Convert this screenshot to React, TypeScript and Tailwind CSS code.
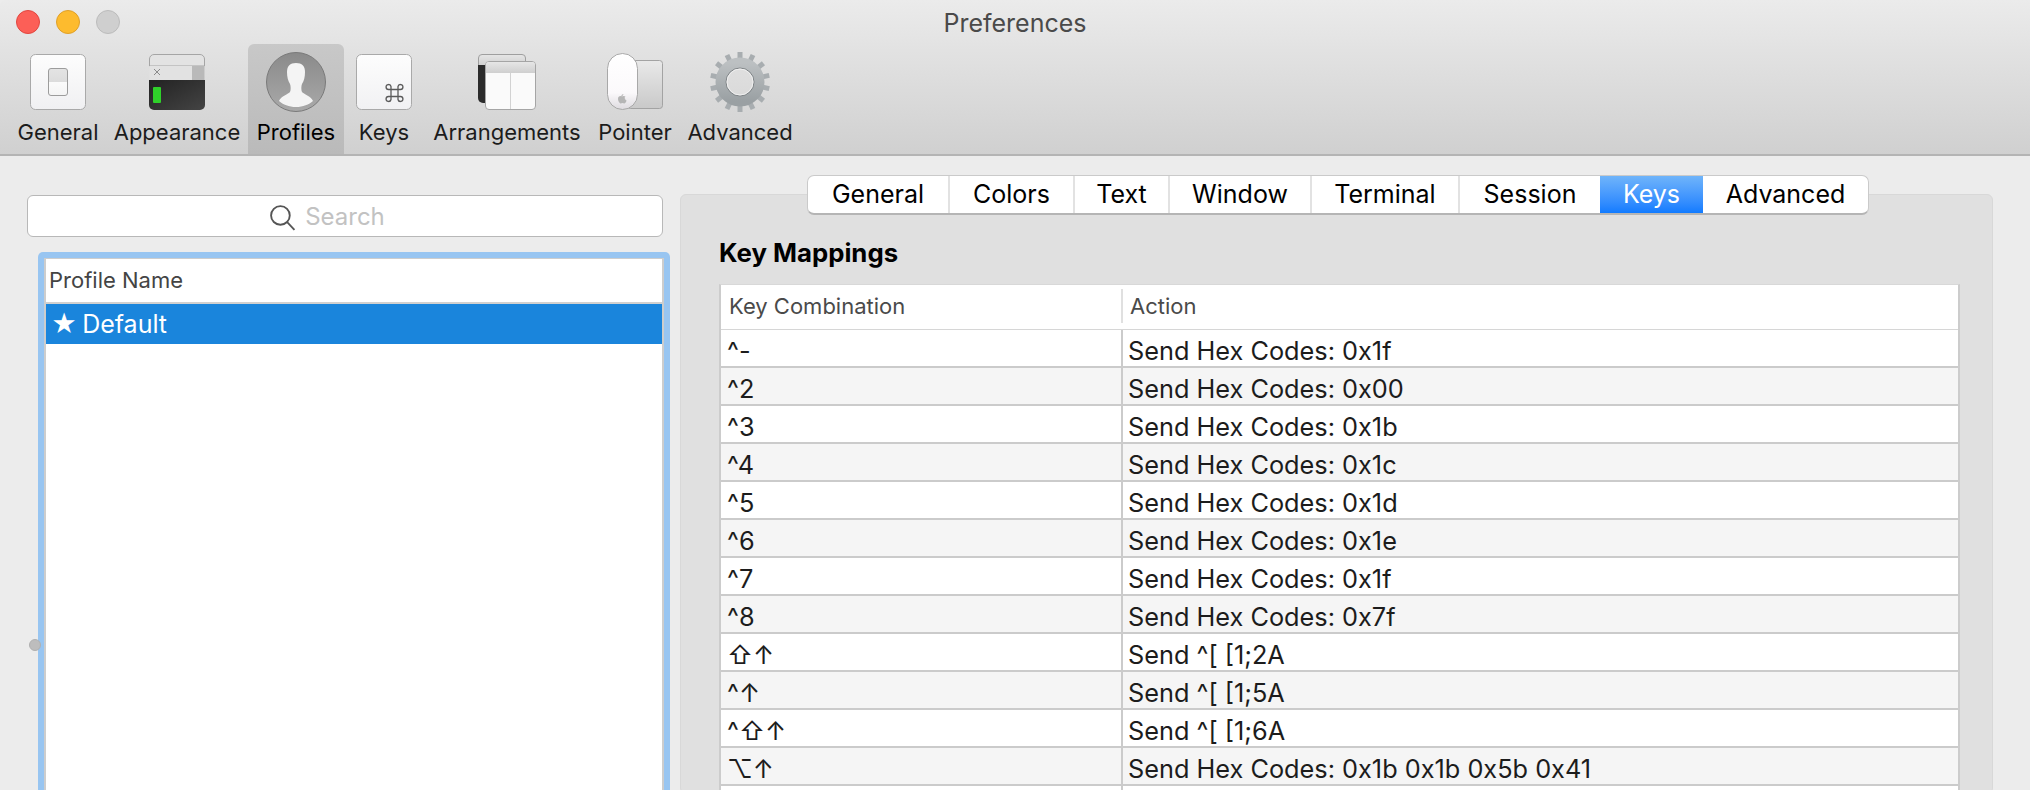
import React from 'react';

const toolbarItems = [
  { label: 'General', width: 'w-[96px]' },
  { label: 'Appearance', width: 'w-[142px]' },
  { label: 'Profiles', width: 'w-[96px]' },
  { label: 'Keys', width: 'w-[80px]' },
  { label: 'Arrangements', width: 'w-[166px]' },
  { label: 'Pointer', width: 'w-[90px]' },
  { label: 'Advanced', width: 'w-[120px]' },
];

const tabs = [
  { label: 'General', width: 'w-[142px]' },
  { label: 'Colors', width: 'w-[125px]' },
  { label: 'Text', width: 'w-[95px]' },
  { label: 'Window', width: 'w-[142px]' },
  { label: 'Terminal', width: 'w-[148px]' },
  { label: 'Session', width: 'w-[140px]' },
  { label: 'Keys', width: 'w-[103px]', active: true },
  { label: 'Advanced', width: 'w-[165px]' },
];

const mappings = [
  ['^-', 'Send Hex Codes: 0x1f'],
  ['^2', 'Send Hex Codes: 0x00'],
  ['^3', 'Send Hex Codes: 0x1b'],
  ['^4', 'Send Hex Codes: 0x1c'],
  ['^5', 'Send Hex Codes: 0x1d'],
  ['^6', 'Send Hex Codes: 0x1e'],
  ['^7', 'Send Hex Codes: 0x1f'],
  ['^8', 'Send Hex Codes: 0x7f'],
  ['⇧↑', 'Send ^[ [1;2A'],
  ['^↑', 'Send ^[ [1;5A'],
  ['^⇧↑', 'Send ^[ [1;6A'],
  ['⌥↑', 'Send Hex Codes: 0x1b 0x1b 0x5b 0x41'],
  ['', ''],
];

const GeneralIcon = () => (
  <svg width="56" height="56" viewBox="0 0 56 56">
    <defs>
      <linearGradient id="gen-bg" x1="0" y1="0" x2="0" y2="1">
        <stop offset="0" stopColor="#fdfdfd" />
        <stop offset="1" stopColor="#f0f0f2" />
      </linearGradient>
      <linearGradient id="gen-sw" x1="0" y1="0" x2="0" y2="1">
        <stop offset="0" stopColor="#e4e4e4" />
        <stop offset="0.5" stopColor="#dcdcdc" />
        <stop offset="0.51" stopColor="#fbfbfb" />
        <stop offset="1" stopColor="#f4f4f4" />
      </linearGradient>
    </defs>
    <rect x="0.5" y="0.5" width="55" height="55" rx="5" fill="url(#gen-bg)" stroke="#a9a9a9" />
    <rect x="18.5" y="14.5" width="19" height="27" rx="2.5" fill="url(#gen-sw)" stroke="#9c9c9c" />
  </svg>
);

const AppearanceIcon = () => (
  <svg width="56" height="56" viewBox="0 0 56 56">
    <defs>
      <linearGradient id="app-term" x1="0" y1="0" x2="1" y2="1">
        <stop offset="0" stopColor="#222" />
        <stop offset="1" stopColor="#444" />
      </linearGradient>
    </defs>
    <path d="M5 0.5h46a4.5 4.5 0 0 1 4.5 4.5v7H0.5V5A4.5 4.5 0 0 1 5 0.5z" fill="#e3e3e3" stroke="#a5a5a5" />
    <rect x="0.5" y="12" width="55" height="14" fill="#e2e2e2" />
    <rect x="43" y="12" width="12.5" height="14" fill="#b9b9b9" />
    <path d="M5 15l6 6M11 15l-6 6" stroke="#8a8a8a" strokeWidth="1" />
    <path d="M0 26h56v25a5 5 0 0 1-5 5H5a5 5 0 0 1-5-5z" fill="url(#app-term)" />
    <rect x="4" y="33" width="8" height="16" rx="1" fill="#2fd12a" />
  </svg>
);

const ProfileIcon = () => (
  <svg width="60" height="60" viewBox="0 0 60 60">
    <defs>
      <linearGradient id="pro-bg" x1="0" y1="0" x2="0" y2="1">
        <stop offset="0" stopColor="#8a8a8a" />
        <stop offset="1" stopColor="#a9a9a9" />
      </linearGradient>
    </defs>
    <circle cx="30" cy="30" r="29.5" fill="url(#pro-bg)" stroke="#7a7a7a" />
    <path
      d="M30 11c-6 0-9 3-9 9 0 5 1 9 3 12 .8 2 1 6 0 8-1.500 2-9 4-11 9 4 3.500 10 6 17 6s13-2.500 17-6c-2-5-9.500-7-11-9-1-2-.8-6 0-8 2-3 3-7 3-12 0-6-3-9-9-9z"
      fill="#f4f4f4"
    />
  </svg>
);

const KeysIcon = () => (
  <svg width="56" height="56" viewBox="0 0 56 56">
    <defs>
      <linearGradient id="key-bg" x1="0" y1="0" x2="0" y2="1">
        <stop offset="0" stopColor="#fdfdfd" />
        <stop offset="1" stopColor="#f1f1f3" />
      </linearGradient>
    </defs>
    <rect x="0.5" y="0.5" width="55" height="55" rx="5" fill="url(#key-bg)" stroke="#a9a9a9" />
    <path
      d="M35 35.500h7v7h-7zM35 35.500v-3a2.500 2.500 0 1 0-2.500 3H35M42 35.500h2.500a2.500 2.500 0 1 0-2.500-3V35.500M35 42.500v3a2.500 2.500 0 1 1-2.500-3H35M42 42.500h2.500a2.500 2.500 0 1 1-2.500 3V42.500"
      fill="none"
      stroke="#5a5a5a"
      strokeWidth="1.300"
    />
  </svg>
);

const ArrangementsIcon = () => (
  <svg width="58" height="56" viewBox="0 0 58 56">
    <defs>
      <linearGradient id="arr-top" x1="0" y1="0" x2="0" y2="1">
        <stop offset="0" stopColor="#e6e6e6" />
        <stop offset="1" stopColor="#cfcfcf" />
      </linearGradient>
    </defs>
    <path d="M4 .5h40a3.500 3.500 0 0 1 3.500 3.500v8H.5V4A3.500 3.500 0 0 1 4 .5z" fill="url(#arr-top)" stroke="#9f9f9f" />
    <path d="M0 11h20v38H5a5 5 0 0 1-5-5z" fill="#2b2b2b" />
    <rect x="7.500" y="7.500" width="50" height="48" rx="3.500" fill="#fafafa" stroke="#a5a5a5" />
    <path d="M11 8h43a3 3 0 0 1 3 3v8H8v-8a3 3 0 0 1 3-3z" fill="url(#arr-top)" />
    <path d="M32.500 19v36" stroke="#d2d2d2" />
  </svg>
);

const PointerIcon = () => (
  <svg width="56" height="58" viewBox="0 0 56 58">
    <defs>
      <linearGradient id="ptr-pad" x1="0" y1="0" x2="0" y2="1">
        <stop offset="0" stopColor="#e9e9e9" />
        <stop offset="1" stopColor="#c9c9c9" />
      </linearGradient>
      <linearGradient id="ptr-mouse" x1="0" y1="0" x2="0" y2="1">
        <stop offset="0" stopColor="#ffffff" />
        <stop offset="0.7" stopColor="#fbf9fb" />
        <stop offset="1" stopColor="#dedbe0" />
      </linearGradient>
    </defs>
    <rect x="20.500" y="7.500" width="35" height="48" rx="3" fill="url(#ptr-pad)" stroke="#a3a3a3" />
    <rect x="0.500" y="0.500" width="30" height="56" rx="15" fill="url(#ptr-mouse)" stroke="#a8a8a8" />
    <path
      d="M15.800 42.500c.6-.7.600-1.500.600-1.500s-1 .1-1.500.8c-.4.500-.6 1.200-.5 1.400.7 0 1-.2 1.400-.7zM17.500 45.500c0-1 .8-1.500 1-1.700-.6-.8-1.400-.9-1.800-.9-.7 0-1.200.4-1.700.4s-1-.4-1.600-.4c-1.200 0-2.400 1-2.400 2.800 0 2.100 1.600 4.800 2.800 4.800.6 0 1-.4 1.700-.4s1 .4 1.700.4c1 0 2-1.900 2.400-3-.8-.3-1.600-1.100-1.600-2.300z"
      fill="#b5b5b5"
    />
  </svg>
);

const GearIcon = () => (
  <svg width="60" height="60" viewBox="0 0 60 60">
    <defs>
      <linearGradient id="gear-bg" x1="0" y1="0" x2="0" y2="1">
        <stop offset="0" stopColor="#bcc0c2" />
        <stop offset="1" stopColor="#9aa0a3" />
      </linearGradient>
    </defs>
    {Array.from({ length: 14 }).map((_, i) => (
      <rect key={i} x="27.500" y="0" width="5" height="12" fill="#a8adb0" transform={`rotate(${(i * 360) / 14} 30 30)`} />
    ))}
    <circle cx="30" cy="30" r="19" fill="none" stroke="url(#gear-bg)" strokeWidth="11" />
    <circle cx="30" cy="30" r="14" fill="none" stroke="#7f8487" strokeWidth="1" />
    <circle cx="30" cy="30" r="13" fill="none" stroke="#f0f0f0" strokeWidth="1" />
  </svg>
);

const toolbarIcons = [GeneralIcon, AppearanceIcon, ProfileIcon, KeysIcon, ArrangementsIcon, PointerIcon, GearIcon];

export default function App() {
  return (
    <div className="w-[2030px] h-[790px] overflow-hidden bg-[#ececec] text-[#1c1c1c] [font-family:Inter,sans-serif]">
      {/* title bar and toolbar */}
      <div className="relative h-[156px] border-b-2 border-[#b4b4b4] bg-gradient-to-b from-[#ebebeb] to-[#d0d0d0] rounded-tl-[6px]">
        <div className="h-[44px] flex items-center pl-[16px] gap-[16px]">
          <span className="w-[24px] h-[24px] rounded-full bg-[#fc5f57] border border-[#e2463f]" />
          <span className="w-[24px] h-[24px] rounded-full bg-[#fdbb2e] border border-[#e0a028]" />
          <span className="w-[24px] h-[24px] rounded-full bg-[#cfcfcf] border border-[#bcbcbc]" />
          <span className="flex-1 text-center text-[25px] text-[#4a4a4a] pr-[136px] pt-[3px]">Preferences</span>
        </div>
        <div className="flex pl-[10px] h-[110px]">
          {toolbarItems.map((item, i) => {
            const Icon = toolbarIcons[i];
            return (
              <div
                key={item.label}
                className={`${item.width} flex flex-col items-center rounded-t-[6px] ${item.label === 'Profiles' ? 'bg-gradient-to-b from-[#c8c8c8] to-[#bababa] text-black' : ''}`}
              >
                <div className="h-[76px] flex items-center justify-center">
                  <Icon />
                </div>
                <span className="text-[22px] leading-[24px] whitespace-nowrap">{item.label}</span>
              </div>
            );
          })}
        </div>
      </div>

      <div className="flex">
        {/* profile list */}
        <div className="w-[680px] shrink-0 pl-[27px] pt-[39px] relative">
          <div className="w-[636px] h-[42px] bg-white border border-[#b8b8b8] rounded-[6px] flex items-center justify-center gap-[9px] pr-[36px] pt-[2px]">
            <svg width="27" height="27" viewBox="0 0 26 26" fill="none" stroke="#555" strokeWidth="1.800">
              <circle cx="11" cy="11" r="9" />
              <path d="M17.500 17.500l7 7.500" />
            </svg>
            <span className="text-[24px] text-[#c2c2c2]">Search</span>
          </div>
          <div className="ml-[11px] mt-[15px] w-[632px] h-[600px] bg-[#98c5f1] rounded-[5px] p-[6px]">
            <div className="h-full bg-white border-2 border-[#cdcdcd] border-t-[1px]">
              <div className="h-[45px] border-b-2 border-[#d0d0d0] flex items-center pl-[3px] text-[22px] text-[#444]">Profile Name</div>
              <div className="h-[40px] bg-[#1a85dc] text-white text-[25px] flex items-center pl-[5px] gap-[5px] pt-[2px]">
                <span>★</span>
                <span>Default</span>
              </div>
            </div>
          </div>
          <span className="absolute left-[29px] top-[483px] w-[12px] h-[12px] rounded-full bg-[#bdbdbd] border border-[#b0b0b0]" />
        </div>

        {/* settings panel */}
        <div className="flex-1 mr-[37px] mt-[38px] h-[600px] bg-[#e0e0e0] border border-[#d8d8d8] rounded-[6px] pl-[38px] pr-[32px]">
          <div className="-mt-[20px] ml-[88px] w-[1062px] h-[40px] flex bg-white rounded-[7px] border border-[#cacaca] border-b-2 border-b-[#b5b5b5] overflow-hidden text-[25px] text-black">
            {tabs.map((tab, i) => (
              <div
                key={tab.label}
                className={`${tab.width} shrink-0 flex items-center justify-center ${tab.active ? 'bg-gradient-to-b from-[#6fb4fa] to-[#0f7bff] text-white' : ''} ${i < 5 ? 'border-r-2 border-[#e2e2e2]' : ''}`}
              >
                {tab.label}
              </div>
            ))}
          </div>
          <h2 className="mt-[18px] text-[25.750px] leading-[40px] font-bold text-black">Key Mappings</h2>
          <div className="mt-[11px] bg-white border-t border-[#d8d8d8] border-x-2 border-x-[#cccccc]">
            <div className="h-[45px] flex border-b border-[#d6d6d6] text-[22px] text-[#4a4a4a] pb-[2px]">
              <div className="w-[400px] shrink-0 flex items-center pl-[8px]">Key Combination</div>
              <div className="flex-1 my-[4px] border-l-2 border-[#e0e0e0] flex items-center pl-[7px]">Action</div>
            </div>
            {mappings.map(([keys, action], i) => (
              <div key={i} className={`h-[38px] flex border-b-2 border-[#cbcbcb] text-[25.300px] ${i % 2 === 0 ? 'bg-white' : 'bg-[#f5f5f5]'}`}>
                <div className="w-[402px] shrink-0 border-r-2 border-[#cbcbcb] flex items-center pl-[6px] pt-[6px]">{keys}</div>
                <div className="flex-1 flex items-center pl-[5px] pt-[6px]">{action}</div>
              </div>
            ))}
          </div>
        </div>
      </div>
    </div>
  );
}
